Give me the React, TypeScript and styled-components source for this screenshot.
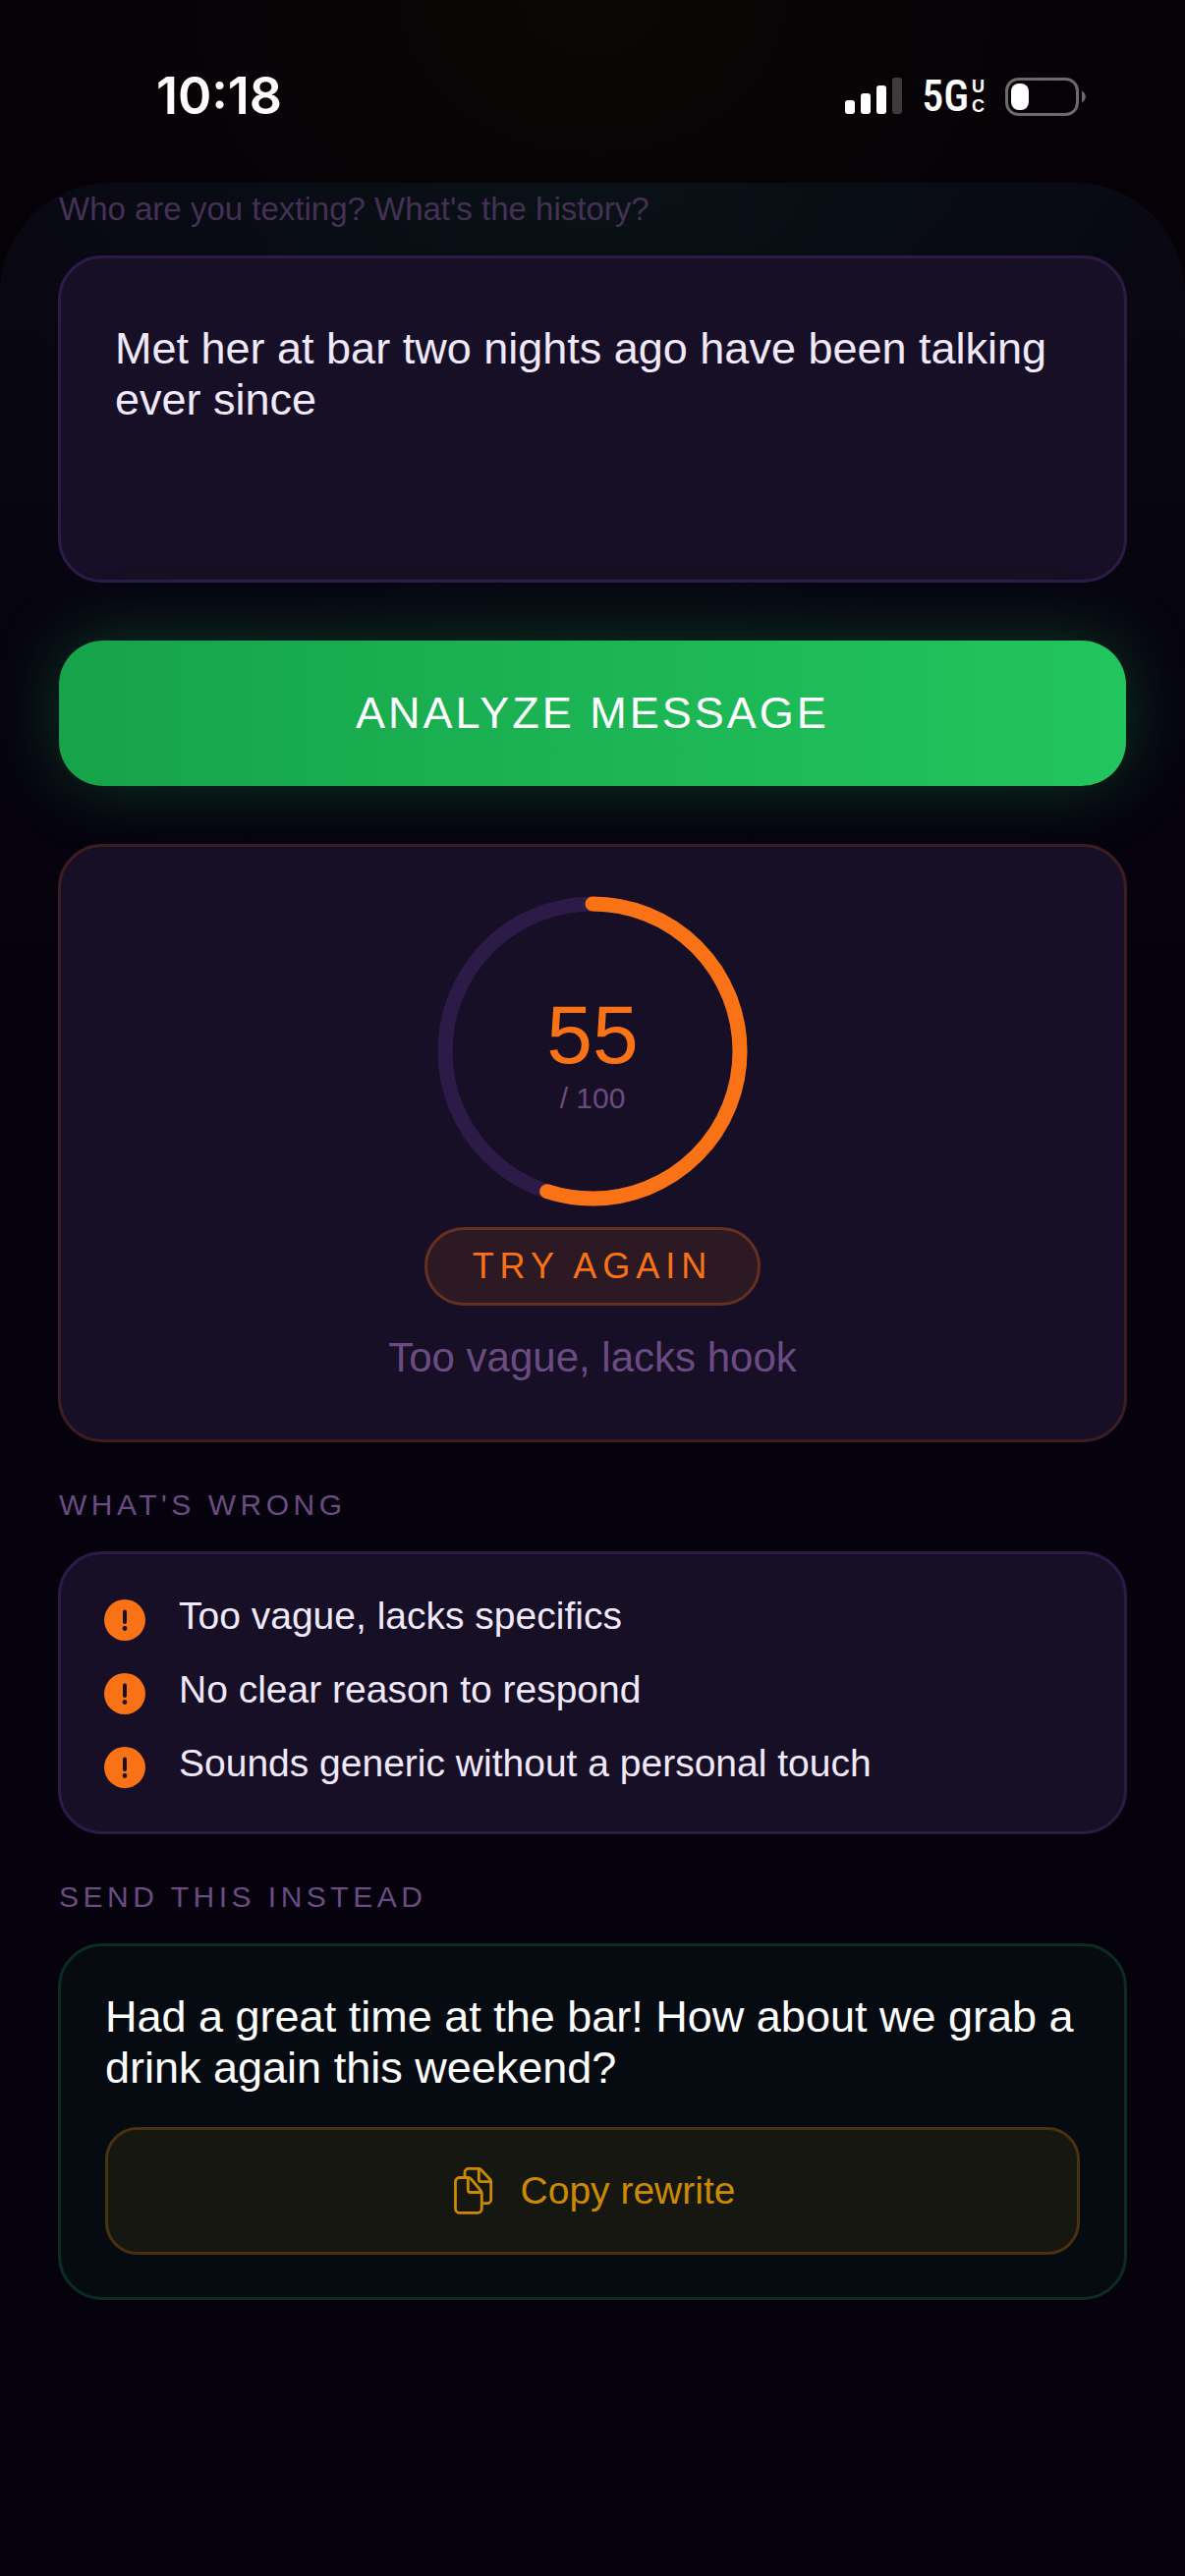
import React from "react";
import styled, { createGlobalStyle } from "styled-components";

const color = {
  page: "#05010d",
  card: "#170f25",
  line: "#2d1b47",
  text: "#f0e8fb",
  muted: "#6b4c82",
  orange: "#f97316",
  gold: "#ca8a04",
};

const GlobalStyle = createGlobalStyle`
  *, *::before, *::after { box-sizing: border-box; }
  body {
    margin: 0;
    background: ${color.page};
    color: ${color.text};
    font-family: "Liberation Sans", Arial, Helvetica, sans-serif;
  }
  button, textarea { font: inherit; }
`;

const Screen = styled.div`
  min-height: 100vh;
  display: flex;
  flex-direction: column;
  background: radial-gradient(ellipse 500px 400px at 50% 0, #0b0705, #050106);
`;

const StatusBar = styled.header`
  height: 186px;
  padding: 10px 101px 0 159px;
  display: flex;
  align-items: center;
  justify-content: space-between;
  color: #fff;
  font-family: Inter, "Liberation Sans", sans-serif;
`;

const Clock = styled.time`
  font-size: 52px;
  line-height: 60px;
  font-weight: 600;
`;

const StatusIcons = styled.div`
  display: flex;
  align-items: center;
`;

const Network = styled.span`
  display: flex;
  align-items: center;
  gap: 3px;
  margin: 0 21px 0 20px;
  font-family: "Roboto Condensed", Roboto, sans-serif;
  font-weight: 500;
  font-size: 44px;
  line-height: 40px;
`;

const NetworkTag = styled.span`
  display: flex;
  flex-direction: column;
  font-family: "Liberation Sans", sans-serif;
  font-size: 18px;
  line-height: 20px;
  font-weight: 700;
`;

const Sheet = styled.main`
  flex: 1;
  display: flex;
  flex-direction: column;
  padding: 8px 59px 60px;
  border-radius: 112px 112px 0 0;
  background:
    radial-gradient(ellipse 50% 500px at 50% 0, rgba(10, 130, 60, 0.08), transparent),
    linear-gradient(#090813, ${color.page} 800px);
`;

const Caption = styled.label`
  margin: 0 1px 28px;
  font-size: 33px;
  line-height: 38px;
  color: #443154;
`;

const ContextBox = styled.textarea`
  display: block;
  width: 100%;
  height: 333px;
  padding: 66px 55px;
  resize: none;
  outline: none;
  overflow: hidden;
  border: 3px solid ${color.line};
  border-radius: 45px;
  background: ${color.card};
  color: ${color.text};
  font-size: 45px;
  line-height: 52px;
`;

const AnalyzeButton = styled.button`
  height: 148px;
  margin: 59px 1px;
  border: 0;
  border-radius: 45px;
  background: linear-gradient(90deg, #16a34a, #22c55e);
  box-shadow: 0 0 72px rgba(34, 197, 94, 0.28);
  color: #fff;
  font-size: 45px;
  letter-spacing: 3px;
  cursor: pointer;
`;

const Card = styled.section<{ $line?: string; $fill?: string; $pad: string }>`
  display: flex;
  flex-direction: column;
  padding: ${(p) => p.$pad};
  border: 3px solid ${(p) => p.$line ?? color.line};
  border-radius: 45px;
  background: ${(p) => p.$fill ?? color.card};
`;

const ScoreCard = styled(Card)`
  align-items: center;
`;

const Gauge = styled.div`
  display: grid;
  place-items: center;
  margin-bottom: 21px;
  > * { grid-area: 1 / 1; }
`;

const GaugeText = styled.div`
  display: flex;
  flex-direction: column;
  align-items: center;
`;

const Score = styled.strong`
  font-size: 84px;
  line-height: 96px;
  font-weight: 400;
  color: ${color.orange};
`;

const ScoreMax = styled.span`
  font-size: 30px;
  line-height: 34px;
  color: ${color.muted};
`;

const Verdict = styled.span`
  padding: 17px 46px;
  border: 3px solid #663020;
  border-radius: 40px;
  background: #2d1923;
  color: ${color.orange};
  font-size: 36px;
  line-height: 40px;
  letter-spacing: 6px;
`;

const Summary = styled.p`
  margin: 29px 0 0;
  font-size: 42px;
  line-height: 48px;
  color: ${color.muted};
`;

const SectionTitle = styled.h2`
  margin: 47px 1px 30px;
  font-size: 30px;
  line-height: 34px;
  font-weight: 400;
  letter-spacing: 0.15em;
  color: ${color.muted};
`;

const Issues = styled.ul`
  display: flex;
  flex-direction: column;
  gap: 27px;
  margin: 0;
  padding: 0;
  list-style: none;
`;

const Issue = styled.li`
  display: flex;
  gap: 34px;
  font-size: 39px;
  line-height: 45px;
  svg { flex: none; margin-top: 6px; }
`;

const Rewrite = styled.p`
  margin: 0 0 34px;
  font-size: 45px;
  line-height: 52px;
  color: #fff;
`;

const CopyButton = styled.button`
  display: flex;
  align-items: center;
  justify-content: center;
  gap: 24px;
  height: 130px;
  border: 3px solid #48330e;
  border-radius: 33px;
  background: #171712;
  color: ${color.gold};
  font-size: 39px;
  cursor: pointer;
`;

const SignalIcon = () => (
  <svg width="58" height="38" viewBox="0 0 58 38" fill="#fff" aria-hidden="true">
    <rect x="0" y="23" width="10" height="14" rx="3" />
    <rect x="16" y="16" width="10" height="21" rx="3" />
    <rect x="32" y="8" width="10" height="29" rx="3" />
    <rect x="48" y="0" width="10" height="37" rx="3" opacity="0.22" />
  </svg>
);

const BatteryIcon = () => (
  <svg width="82" height="39" viewBox="0 0 82 39" aria-hidden="true">
    <rect x="1.5" y="1.5" width="72" height="36" rx="12" fill="none" stroke="#6c6a6d" strokeWidth="3" />
    <rect x="6" y="6" width="18" height="27" rx="8" fill="#fff" />
    <path d="M78 13.5c5 2.5 5 9.5 0 12z" fill="#6c6a6d" />
  </svg>
);

const Ring = ({ value }: { value: number }) => (
  <svg width="316" height="316" viewBox="0 0 316 316" fill="none" strokeWidth="15" aria-hidden="true">
    <circle cx="158" cy="158" r="150" stroke={color.line} />
    <circle
      cx="158"
      cy="158"
      r="150"
      stroke={color.orange}
      strokeLinecap="round"
      pathLength={100}
      strokeDasharray={`${value} 100`}
      transform="rotate(-90 158 158)"
    />
  </svg>
);

const AlertIcon = () => (
  <svg width="42" height="42" viewBox="0 0 42 42" aria-hidden="true">
    <circle cx="21" cy="21" r="21" fill={color.orange} />
    <path d="M21 12.5V23" stroke={color.card} strokeWidth="4" strokeLinecap="round" />
    <circle cx="21" cy="29.5" r="2.4" fill={color.card} />
  </svg>
);

const CopyIcon = () => (
  <svg width="48" height="48" viewBox="0 0 48 48" fill="none" stroke={color.gold} strokeWidth="2.8" strokeLinejoin="round" aria-hidden="true">
    <path d="M18.3 10.5H9.5a4 4 0 0 0-4 4V42.3a4 4 0 0 0 4 4H28.3a4 4 0 0 0 4-4V26.5q0-1.8-1.2-3.1L21.5 12Q20.3 10.5 18.3 10.5" />
    <path d="M18.3 10.5V23a2.5 2.5 0 0 0 2.5 2.5H32" />
    <path d="M15 10V5.3a4 4 0 0 1 4-4H28.500q2 0 3.3 1.4L40.5 12q1.2 1.3 1.2 3V32.7a4 4 0 0 1-4 4H33.5" />
    <path d="M29.3 1.5V12.5a2.2 2.2 0 0 0 2.2 2.2H41.5" />
  </svg>
);

const issues = [
  "Too vague, lacks specifics",
  "No clear reason to respond",
  "Sounds generic without a personal touch",
];

export default function App() {
  const score = 55;
  return (
    <Screen>
      <GlobalStyle />
      <StatusBar>
        <Clock>10:18</Clock>
        <StatusIcons>
          <SignalIcon />
          <Network>
            5G
            <NetworkTag>
              <span>U</span>
              <span>C</span>
            </NetworkTag>
          </Network>
          <BatteryIcon />
        </StatusIcons>
      </StatusBar>
      <Sheet>
        <Caption htmlFor="context">Who are you texting? What's the history?</Caption>
        <ContextBox
          id="context"
          spellCheck={false}
          defaultValue="Met her at bar two nights ago have been talking ever since"
        />
        <AnalyzeButton type="button">ANALYZE MESSAGE</AnalyzeButton>

        <ScoreCard $line="#3c1e22" $pad="50px 45px 59px">
          <Gauge>
            <Ring value={score} />
            <GaugeText>
              <Score>{score}</Score>
              <ScoreMax>/ 100</ScoreMax>
            </GaugeText>
          </Gauge>
          <Verdict>TRY AGAIN</Verdict>
          <Summary>Too vague, lacks hook</Summary>
        </ScoreCard>

        <SectionTitle>WHAT'S WRONG</SectionTitle>
        <Card $pad="40px 44px 44px">
          <Issues>
            {issues.map((issue) => (
              <Issue key={issue}>
                <AlertIcon />
                {issue}
              </Issue>
            ))}
          </Issues>
        </Card>

        <SectionTitle>SEND THIS INSTEAD</SectionTitle>
        <Card $line="#0c2c22" $fill="#060b12" $pad="46px 45px 43px">
          <Rewrite>Had a great time at the bar! How about we grab a drink again this weekend?</Rewrite>
          <CopyButton type="button">
            <CopyIcon />
            Copy rewrite
          </CopyButton>
        </Card>
      </Sheet>
    </Screen>
  );
}
